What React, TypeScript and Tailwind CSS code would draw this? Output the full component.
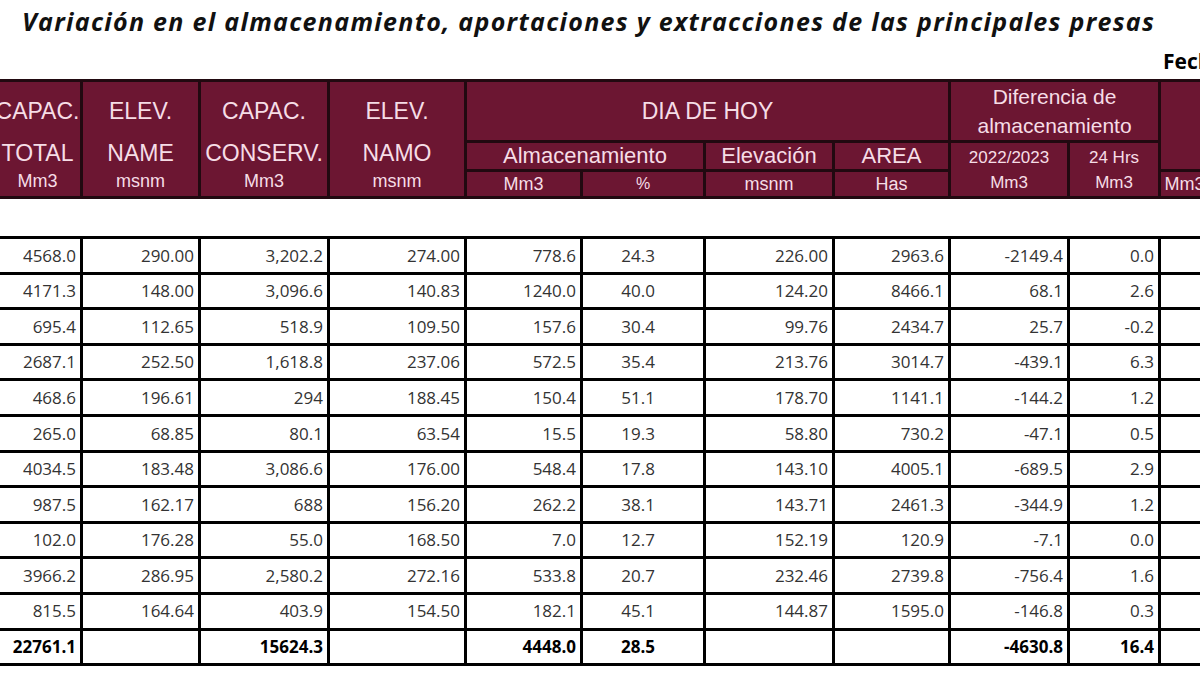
const widths = [88, 118, 129, 137, 116, 123, 129, 116, 119, 91, 50];

const rows: string[][] = [
  ["4568.0", "290.00", "3,202.2", "274.00", "778.6", "24.3", "226.00", "2963.6", "-2149.4", "0.0", ""],
  ["4171.3", "148.00", "3,096.6", "140.83", "1240.0", "40.0", "124.20", "8466.1", "68.1", "2.6", ""],
  ["695.4", "112.65", "518.9", "109.50", "157.6", "30.4", "99.76", "2434.7", "25.7", "-0.2", ""],
  ["2687.1", "252.50", "1,618.8", "237.06", "572.5", "35.4", "213.76", "3014.7", "-439.1", "6.3", ""],
  ["468.6", "196.61", "294", "188.45", "150.4", "51.1", "178.70", "1141.1", "-144.2", "1.2", ""],
  ["265.0", "68.85", "80.1", "63.54", "15.5", "19.3", "58.80", "730.2", "-47.1", "0.5", ""],
  ["4034.5", "183.48", "3,086.6", "176.00", "548.4", "17.8", "143.10", "4005.1", "-689.5", "2.9", ""],
  ["987.5", "162.17", "688", "156.20", "262.2", "38.1", "143.71", "2461.3", "-344.9", "1.2", ""],
  ["102.0", "176.28", "55.0", "168.50", "7.0", "12.7", "152.19", "120.9", "-7.1", "0.0", ""],
  ["3966.2", "286.95", "2,580.2", "272.16", "533.8", "20.7", "232.46", "2739.8", "-756.4", "1.6", ""],
  ["815.5", "164.64", "403.9", "154.50", "182.1", "45.1", "144.87", "1595.0", "-146.8", "0.3", ""],
];

const totals = ["22761.1", "", "15624.3", "", "4448.0", "28.5", "", "", "-4630.8", "16.4", ""];

function Cols() {
  return (
    <colgroup>
      {widths.map((w, i) => (
        <col key={i} style={{ width: w }} />
      ))}
    </colgroup>
  );
}

// tall header cells: three stacked labels lined up with the grouped rows
function StackCell({ top, mid, unit }: { top: string; mid: string; unit: string }) {
  return (
    <th rowSpan={3} className="border-[3px] border-[#210910] p-0 font-normal">
      <div className="flex flex-col items-center whitespace-nowrap">
        <div className="h-[55px] flex items-center text-[23px]">{top}</div>
        <div className="h-[30px] flex items-center text-[23px]">{mid}</div>
        <div className="h-[26px] flex items-center text-[18px]">{unit}</div>
      </div>
    </th>
  );
}

export default function App() {
  const th = "border-[3px] border-[#210910] p-0 font-normal whitespace-nowrap";
  return (
    <div className="w-[1200px] h-[675px] overflow-hidden bg-white" style={{ fontFamily: '"Open Sans", sans-serif' }}>
      <div className="h-[44px] pl-[22px] flex items-center text-[25px] font-bold italic text-[#111] tracking-[1.3px]">
        Variación en el almacenamiento, aportaciones y extracciones de las principales presas
      </div>
      <div className="h-[35px] pl-[1163px] flex items-center text-[21px] font-bold text-black whitespace-nowrap">
        Fecha
      </div>

      <table
        className="ml-[-8px] w-[1216px] table-fixed border-collapse bg-[#6c1632] text-[#f6dde6] border-t-2 border-t-black"
        style={{ fontFamily: '"Liberation Sans", Arial, sans-serif' }}
      >
        <Cols />
        <thead>
          <tr className="h-[56px]">
            <StackCell top="CAPAC." mid="TOTAL" unit="Mm3" />
            <StackCell top="ELEV." mid="NAME" unit="msnm" />
            <StackCell top="CAPAC." mid="CONSERV." unit="Mm3" />
            <StackCell top="ELEV." mid="NAMO" unit="msnm" />
            <th colSpan={4} className={th + " text-[23px]"}>DIA DE HOY</th>
            <th colSpan={2} className={th + " text-[21px] leading-[29px]"}>
              Diferencia de
              <br />
              almacenamiento
            </th>
            <th rowSpan={2} className={th}></th>
          </tr>
          <tr className="h-[29px]">
            <th colSpan={2} className={th + " text-[22px] leading-[24px]"}>Almacenamiento</th>
            <th className={th + " text-[22px] leading-[24px]"}>Elevación</th>
            <th className={th + " text-[22px] leading-[24px]"}>AREA</th>
            <th rowSpan={2} className={th + " text-[17px] leading-[25px]"}>
              2022/2023
              <br />
              Mm3
            </th>
            <th rowSpan={2} className={th + " text-[17px] leading-[25px]"}>
              24 Hrs
              <br />
              Mm3
            </th>
          </tr>
          <tr className="h-[27px] text-[18px] leading-[22px]">
            <th className={th}>Mm3</th>
            <th className={th + " text-[16px]"}>%</th>
            <th className={th}>msnm</th>
            <th className={th}>Has</th>
            <th className={th}>Mm3</th>
          </tr>
        </thead>
      </table>

      <table className="mt-[37px] ml-[-8px] w-[1216px] table-fixed border-collapse text-[17px] text-[#333]">
        <Cols />
        <tbody>
          {rows.map((r, i) => (
            <tr key={i} className="h-[35.6px]">
              {r.map((v, j) => (
                <td
                  key={j}
                  className={
                    "border-[3px] border-black p-0 text-right whitespace-nowrap " +
                    (j === 5 ? "pr-[48px]" : "pr-[4px]")
                  }
                >
                  {v}
                </td>
              ))}
            </tr>
          ))}
          <tr className="h-[35.6px] font-bold text-black">
            {totals.map((v, j) => (
              <td
                key={j}
                className={
                  "border-[3px] border-black p-0 text-right whitespace-nowrap " +
                  (j === 5 ? "pr-[48px]" : "pr-[4px]")
                }
              >
                {v}
              </td>
            ))}
          </tr>
        </tbody>
      </table>
    </div>
  );
}
